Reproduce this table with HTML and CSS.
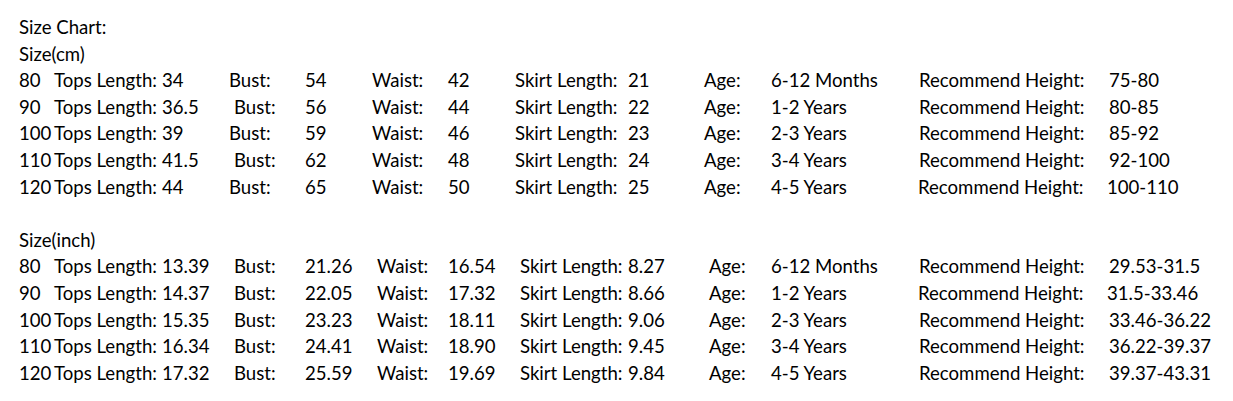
FILE: index.html
```html
<!DOCTYPE html>
<html lang="en">
<head>
<meta charset="utf-8">
<title>Size Chart</title>
<link rel="stylesheet" href="styles.css">
</head>
<body>
<div class="chart">
  <div class="line">Size Chart:</div>
  <div class="line">Size(cm)</div>

  <div class="row cm">
    <span>80</span><span>Tops Length:</span><span>34</span><span>Bust:</span><span>54</span><span>Waist:</span><span>42</span><span>Skirt Length:</span><span>21</span><span>Age:</span><span>6-12 Months</span><span>Recommend Height:</span><span>75-80</span>
  </div>
  <div class="row cm">
    <span>90</span><span>Tops Length:</span><span>36.5</span><span class="r5">Bust:</span><span>56</span><span>Waist:</span><span>44</span><span>Skirt Length:</span><span>22</span><span>Age:</span><span>1-2 Years</span><span>Recommend Height:</span><span>80-85</span>
  </div>
  <div class="row cm">
    <span>100</span><span>Tops Length:</span><span>39</span><span>Bust:</span><span>59</span><span>Waist:</span><span>46</span><span>Skirt Length:</span><span>23</span><span>Age:</span><span>2-3 Years</span><span>Recommend Height:</span><span>85-92</span>
  </div>
  <div class="row cm">
    <span>110</span><span>Tops Length:</span><span>41.5</span><span class="r5">Bust:</span><span>62</span><span>Waist:</span><span>48</span><span>Skirt Length:</span><span>24</span><span>Age:</span><span>3-4 Years</span><span>Recommend Height:</span><span>92-100</span>
  </div>
  <div class="row cm">
    <span>120</span><span>Tops Length:</span><span>44</span><span>Bust:</span><span>65</span><span>Waist:</span><span>50</span><span>Skirt Length:</span><span>25</span><span>Age:</span><span>4-5 Years</span><span class="l1">Recommend Height:</span><span class="l2">100-110</span>
  </div>

  <div class="line blank"></div>
  <div class="line">Size(inch)</div>

  <div class="row inch">
    <span>80</span><span>Tops Length:</span><span>13.39</span><span>Bust:</span><span>21.26</span><span>Waist:</span><span>16.54</span><span>Skirt Length:</span><span>8.27</span><span>Age:</span><span>6-12 Months</span><span>Recommend Height:</span><span>29.53-31.5</span>
  </div>
  <div class="row inch">
    <span>90</span><span>Tops Length:</span><span>14.37</span><span>Bust:</span><span>22.05</span><span>Waist:</span><span>17.32</span><span>Skirt Length:</span><span>8.66</span><span>Age:</span><span>1-2 Years</span><span class="l1">Recommend Height:</span><span class="l2">31.5-33.46</span>
  </div>
  <div class="row inch">
    <span>100</span><span>Tops Length:</span><span>15.35</span><span>Bust:</span><span>23.23</span><span>Waist:</span><span>18.11</span><span>Skirt Length:</span><span>9.06</span><span>Age:</span><span>2-3 Years</span><span>Recommend Height:</span><span>33.46-36.22</span>
  </div>
  <div class="row inch">
    <span>110</span><span>Tops Length:</span><span>16.34</span><span>Bust:</span><span>24.41</span><span>Waist:</span><span>18.90</span><span>Skirt Length:</span><span>9.45</span><span>Age:</span><span>3-4 Years</span><span>Recommend Height:</span><span>36.22-39.37</span>
  </div>
  <div class="row inch">
    <span>120</span><span>Tops Length:</span><span>17.32</span><span>Bust:</span><span>25.59</span><span>Waist:</span><span>19.69</span><span>Skirt Length:</span><span>9.84</span><span>Age:</span><span>4-5 Years</span><span>Recommend Height:</span><span>39.37-43.31</span>
  </div>
</div>
</body>
</html>
```

FILE: styles.css
```css
html, body {
  margin: 0;
  padding: 0;
  background: #ffffff;
}

body {
  font-family: Lato, "Open Sans", "Liberation Sans", sans-serif;
  font-size: 18.6px;
  color: #000000;
}

.chart {
  padding: 14px 0 0 19px;
  line-height: 26.6px;
}

.line {
  height: 26.6px;
  white-space: nowrap;
}

.row {
  display: grid;
  height: 26.6px;
  white-space: nowrap;
}

.row.cm {
  grid-template-columns: 35px 108px 67px 76px 67px 76px 67px 113px 76px 67px 148px 190px auto;
}

.row.inch {
  grid-template-columns: 35px 108px 72px 71px 72px 71px 72px 108px 81px 62px 148px 190px auto;
}

.r5 {
  margin-left: 5px;
}

.l1 {
  margin-left: -1px;
}

.l2 {
  margin-left: -2px;
}
```
